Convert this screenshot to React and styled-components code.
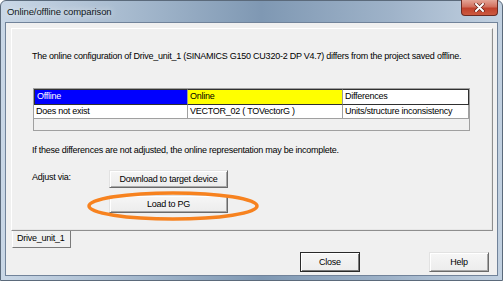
import React from "react";
import styled, { createGlobalStyle } from "styled-components";

const Global = createGlobalStyle`
  *, *::before, *::after { box-sizing: border-box; }
  html, body { margin: 0; padding: 0; background: #ffffff; }
  body {
    font-family: "Liberation Sans", Arial, sans-serif;
    font-size: 9px;
    letter-spacing: -0.25px;
    color: #000;
  }
`;

const Window = styled.div`
  width: 503px;
  height: 281px;
  display: flex;
  flex-direction: column;
  padding: 0 4px 4px 4px;
  border: 1px solid #5b6a7b;
  border-radius: 6px 6px 0 0;
  background: linear-gradient(90deg, #c9d7e6 0%, #a3b7cc 28%, #7f98b3 52%, #9fb3c9 78%, #c2d1e1 100%);
`;

const TitleBar = styled.div`
  height: 21px;
  flex: none;
  display: flex;
  align-items: flex-start;
`;

const Title = styled.div`
  padding: 5px 0 0 2px;
  font-size: 9.5px;
  letter-spacing: -0.1px;
  color: #101820;
  text-shadow: 0 0 6px rgba(255, 255, 255, 0.9);
`;

const CloseBox = styled.div`
  margin: -1px 0 0 auto;
  width: 37px;
  height: 16px;
  border: 1px solid #6b2a22;
  border-top: none;
  border-radius: 0 0 4px 4px;
  background: linear-gradient(180deg, #e4a597 0%, #d2705e 45%, #c0412c 55%, #cc5a40 100%);
  display: flex;
  align-items: center;
  justify-content: center;
`;

const Body = styled.div`
  flex: 1;
  display: flex;
  flex-direction: column;
  background: #f0f0f0;
  border: 1px solid #71839a;
  padding: 5px 4px 0 5px;
`;

const TabPage = styled.div`
  position: relative;
  height: 203px;
  flex: none;
  border: 1px solid;
  border-color: #ffffff #8e8e8e #8e8e8e #ffffff;
  box-shadow: inset -1px -1px 0 #e6e6e6;
  padding: 21px 0 0 20px;
`;

const Text = styled.div`
  height: 12px;
  line-height: 12px;
  white-space: nowrap;
`;

const Table = styled.div`
  margin: 26px 0 0 1px;
  width: 437px;
  height: 43px;
  border: 1px solid #a0a0a0;
  background: #f0f0f0;
`;

const Row = styled.div`
  display: grid;
  grid-template-columns: 154px 155px 126px;
  height: ${(p) => p.$h}px;
`;

const HeadCell = styled.div`
  background: ${(p) => p.$bg};
  color: ${(p) => p.$fg};
  border-top: 1px solid #303030;
  border-bottom: 1px solid #303030;
  border-right: 1px solid ${(p) => (p.$last ? "#303030" : "#9a9a9a")};
  border-left: ${(p) => (p.$first ? "1px solid #303030" : "none")};
  padding-left: 2px;
  line-height: 13px;
  white-space: nowrap;
`;

const Cell = styled.div`
  background: #ffffff;
  border-right: 1px solid #a0a0a0;
  border-bottom: 1px solid #a0a0a0;
  padding-left: 2px;
  line-height: 13px;
  white-space: nowrap;
`;

const AdjustRow = styled.div`
  margin-top: 14px;
  display: grid;
  grid-template-columns: 77px 119px;
  align-items: start;
`;

const ButtonStack = styled.div`
  display: flex;
  flex-direction: column;
  gap: 7px;
`;

const Button = styled.div`
  height: ${(p) => p.$h || 18}px;
  width: ${(p) => p.$w || 119}px;
  display: flex;
  align-items: center;
  justify-content: center;
  background: linear-gradient(180deg, #f6f6f6 0%, #ececec 100%);
  border: 1px solid;
  border-color: #e2e2e2 #6a6a6a #6a6a6a #e2e2e2;
  box-shadow: inset 1px 1px 0 #ffffff, inset -1px -1px 0 #a8a8a8;
  ${(p) => p.$default && "border-color: #2a2a2a; box-shadow: inset 1px 1px 0 #ffffff, inset -1px -1px 0 #7a7a7a;"}
`;

const Mark = styled.svg`
  position: absolute;
  left: 73px;
  top: 160px;
  pointer-events: none;
`;

const TabRow = styled.div`
  display: flex;
  margin-top: -1px;
  padding-left: 1px;
`;

const Tab = styled.div`
  width: 59px;
  height: 18px;
  background: #f0f0f0;
  border: 1px solid;
  border-top: none;
  border-color: #f0f0f0 #7a7a7a #7a7a7a #ffffff;
  padding-left: 4px;
  line-height: 16px;
`;

const Footer = styled.div`
  display: flex;
  justify-content: flex-end;
  gap: 69px;
  margin: 4px 4px 0 0;
`;

export default function App() {
  return (
    <>
      <Global />
      <Window>
        <TitleBar>
          <Title>Online/offline comparison</Title>
          <CloseBox>
            <svg width="11" height="9" viewBox="0 0 11 9">
              <path d="M2 1 L9 8 M9 1 L2 8" stroke="#5a1c14" strokeWidth="3.2" strokeLinecap="round" />
              <path d="M2 1 L9 8 M9 1 L2 8" stroke="#ffffff" strokeWidth="2" strokeLinecap="round" />
            </svg>
          </CloseBox>
        </TitleBar>
        <Body>
          <TabPage>
            <Text>
              The online configuration of Drive_unit_1 (SINAMICS G150 CU320-2 DP V4.7) differs from the project saved offline.
            </Text>
            <Table>
              <Row $h={16}>
                <HeadCell $bg="#0000ff" $fg="#ffffff" $first>Offline</HeadCell>
                <HeadCell $bg="#ffff00" $fg="#000000">Online</HeadCell>
                <HeadCell $bg="#ffffff" $fg="#000000" $last>Differences</HeadCell>
              </Row>
              <Row $h={14}>
                <Cell>Does not exist</Cell>
                <Cell>VECTOR_02 ( TOVectorG )</Cell>
                <Cell>Units/structure inconsistency</Cell>
              </Row>
            </Table>
            <Text style={{ marginTop: 13 }}>
              If these differences are not adjusted, the online representation may be incomplete.
            </Text>
            <AdjustRow>
              <Text style={{ marginTop: 1 }}>Adjust via:</Text>
              <ButtonStack>
                <Button>Download to target device</Button>
                <Button>Load to PG</Button>
              </ButtonStack>
            </AdjustRow>
            <Mark width="176" height="34" viewBox="0 0 176 34">
              <ellipse cx="88" cy="17" rx="84" ry="13" fill="none" stroke="#f7821f" strokeWidth="3.5" />
            </Mark>
          </TabPage>
          <TabRow>
            <Tab>Drive_unit_1</Tab>
          </TabRow>
          <Footer>
            <Button $w={60} $h={20} $default>Close</Button>
            <Button $w={60} $h={20}>Help</Button>
          </Footer>
        </Body>
      </Window>
    </>
  );
}
